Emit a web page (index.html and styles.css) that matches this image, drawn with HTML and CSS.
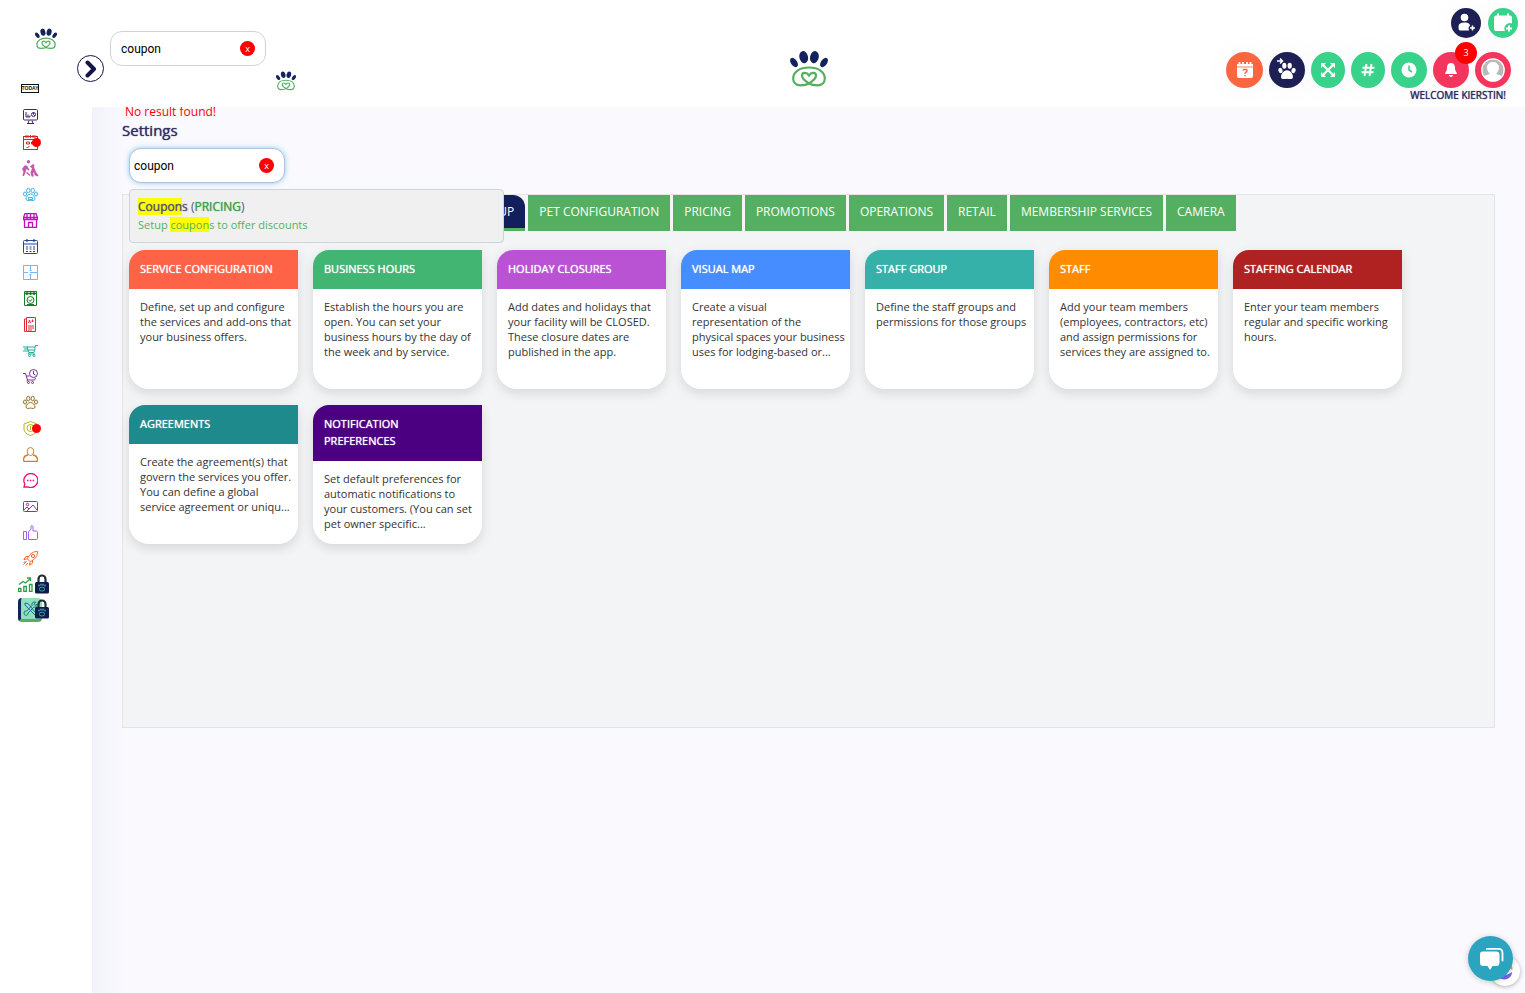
FILE: index.html
```html
<!DOCTYPE html>
<html lang="en">
  <head>
    <meta charset="UTF-8" />
    <meta name="viewport" content="width=device-width, initial-scale=1.0" />
    <title>Settings</title>
    <link rel="stylesheet" href="styles.css">
  </head>
  <body>
    <svg class="sprite" aria-hidden="true">
      <symbol id="logo" viewBox="0 0 38 36">
        <g fill="#14225f">
          <ellipse cx="4" cy="11.5" rx="3.1" ry="5.200" transform="rotate(-35 4 11.5)" />
          <ellipse cx="13.7" cy="6.2" rx="4.300" ry="6.200" transform="rotate(-12 13.7 6.2)" />
          <ellipse cx="24.4" cy="6.2" rx="4.300" ry="6.200" transform="rotate(12 24.4 6.2)" />
          <ellipse cx="34" cy="11.5" rx="3.1" ry="5.200" transform="rotate(35 34 11.5)" />
        </g>
        <path d="M19 32.5 C15 30 12 27.500 12 24.500 C12 21.500 16.500 20.500 19 24.500 C21.500 20.500 26 21.500 26 24.500 C26 27.500 23 30 19 32.500 C16 34.300 13 34.300 10.500 34.300 C6 34.300 3.200 31.500 3.200 27.500 C3.200 21 9.500 16.500 19 16.500 C28.500 16.500 34.800 21 34.800 27.500 C34.800 31.500 32 34.300 27.500 34.300 C25 34.300 22 34.300 19 32.500" fill="none" stroke="#54b060" stroke-width="2.200" />
      </symbol>
      <symbol id="paw" viewBox="0 0 16 16">
        <ellipse cx="2.200" cy="7.600" rx="1.800" ry="2.400" transform="rotate(-20 2.200 7.600)" />
        <ellipse cx="5.600" cy="3.400" rx="1.900" ry="2.700" />
        <ellipse cx="10.400" cy="3.400" rx="1.900" ry="2.700" />
        <ellipse cx="13.800" cy="7.600" rx="1.800" ry="2.400" transform="rotate(20 13.800 7.600)" />
        <path d="M8 7.300c-2.500 0-5.300 3-5.300 5.700 0 2.900 3.300 2.300 5.300 1.800 2 .5 5.300 1.100 5.300-1.800 0-2.700-2.800-5.700-5.300-5.700z" />
      </symbol>
      <symbol id="lock" viewBox="0 0 14 20">
        <path d="M3.500 10V5a3.500 3.500 0 0 1 7 0v5" fill="none" stroke="#222b38" stroke-width="2.200" />
        <rect x="0" y="8" width="14" height="11.500" rx="1.500" fill="#101c4c" />
        <g fill="#4a9fb0">
          <ellipse cx="4" cy="11.500" rx=".8" ry="1.100" />
          <ellipse cx="6" cy="10.700" rx=".8" ry="1.100" />
          <ellipse cx="8" cy="10.700" rx=".8" ry="1.100" />
          <ellipse cx="10" cy="11.500" rx=".8" ry="1.100" />
        </g>
        <rect x="4.500" y="13.300" width="5" height="3.600" rx="1.600" fill="none" stroke="#4a9fb0" />
      </symbol>
    </svg>

    <aside class="sidebar">
      <a class="brand" href="#" aria-label="Home"><svg width="22" height="22"><use href="#logo" /></svg></a>
      <nav class="menu">
        <a href="#" class="today">TODAY</a>
        <a href="#" class="c-navy" aria-label="Dashboard"><svg viewBox="0 0 15 15"><rect x=".5" y=".5" width="14" height="10.500" rx="1" /><path d="M3 3v5h4M5 5.500V8M7 6.500V8M5 14.500l1-3M10 14.500l-1-3M4 14.500h7" /><circle cx="10.500" cy="5.500" r="2" /><path d="M10.500 3.500v2l1.500 1.400" /></svg></a>
        <a href="#" class="c-red" aria-label="Requests"><svg viewBox="0 0 15 15"><rect x=".5" y="1.500" width="14" height="13" /><path d="M.5 4.500h14M3 0v3M5 0v3M7.500 0v3M10 0v3M12 0v3M3.500 7h3v2h-3zM8.500 7h3v2h-3zM3.500 12l1 1 2-2" /></svg><i class="dot"></i></a>
        <a href="#" class="c-plum" aria-label="Training"><svg class="wide" viewBox="0 0 17 17"><g fill="currentColor" stroke="none"><circle cx="6.500" cy="1.800" r="1.700" /><path d="M0 9l2.500-3.500h2.500l2.500 4.500-1 .8-2-2L4 11l-2 5H.5l1-4.500zM5 12l3.500 3-.8 1L4 13zM8 6.500l3-2.500 1.500 1-.5 2 2 5 2.500 3.500-1 1-3-1.500-.5-3-1 1.500 1 3H9.500l-1-4 1.500-4z" /></g></svg></a>
        <a href="#" class="c-sky" aria-label="Pets"><svg viewBox="0 0 15 15"><ellipse cx="2" cy="7" rx="1.500" ry="2" /><ellipse cx="5.300" cy="3.500" rx="1.700" ry="2.300" /><ellipse cx="9.700" cy="3.500" rx="1.700" ry="2.300" /><ellipse cx="13" cy="7" rx="1.500" ry="2" /><path d="M7.500 7C5 7 3 10 3 12s3 1.500 4.500 1.500S12 14 12 12 10 7 7.500 7zM5.500 10.500h4v2h-4z" /></svg></a>
        <a href="#" class="c-magenta" aria-label="Store"><svg viewBox="0 0 15 15"><path d="M1.500 7v7.500h12V7M2 .5h11l1.500 4v2h-14v-2zM.5 4.500h14M4 1v5M7.500 1v5M11 1v5M5.500 14.500V9.500h4v5" stroke-width="1.300" /></svg></a>
        <a href="#" class="c-blue" aria-label="Calendar"><svg viewBox="0 0 15 15"><rect x=".5" y="1.500" width="14" height="13" rx="1" /><path d="M.5 5h14M4 0v3M11 0v3M3 8h2M6.500 8h2M10 8h2M3 10h2M6.500 10h2M10 10h2M3 12.500h2M6.500 12.500h2M10 12.500h2" stroke-width="1.200" /></svg></a>
        <a href="#" class="c-light" aria-label="Facility map"><svg viewBox="0 0 15 15"><path d="M.5.5h14v14H.500zM7.500.5v5M7.500 9.500v5M.5 7.500h4.500M7 7.500h7.500M6.500 5.500h2M6.500 9.500h2" /></svg></a>
        <a href="#" class="c-green" aria-label="Check in"><svg viewBox="0 0 15 15"><path d="M1.500.5h12v14h-12z" /><path d="M2 2.500h11M4 1v3M7.500 1v3M11 1v3" stroke-width="1.600" /><circle cx="7.500" cy="9" r="3.500" /><path d="M5.500 9l1.500 1.300L9.500 8M4 13.500h7" /></svg></a>
        <a href="#" class="c-crimson" aria-label="Report cards"><svg viewBox="0 0 15 15"><path d="M3.500.5h9v14h-9zM3.500 2h-2v12.500h2M5 9h6M5 11h6M5 13h4" /><path d="M5.500 6l1-3 1 3M9.500 2.500v2.500M8.500 4h2" /></svg></a>
        <a href="#" class="c-teal" aria-label="Orders"><svg viewBox="0 0 15 15"><path d="M15 2.500h-2.500l-1.500 7H6L4 4h8M0 4h5M1 6h4M0 8h5M5 7h6M6 9.500L5 11h7" /><circle cx="6.500" cy="12.500" r="1" /><circle cx="11" cy="12.500" r="1" /></svg></a>
        <a href="#" class="c-purple" aria-label="Abandoned carts"><svg viewBox="0 0 15 15"><circle cx="10.500" cy="4.500" r="4" /><path d="M10.500 2v3l2 1M0 4.500h2.500L4.500 11h7l1-2M3.500 7h3M4.500 11L4 12.500" /><circle cx="5.500" cy="13.500" r="1" /><circle cx="9.500" cy="13.500" r="1" /></svg></a>
        <a href="#" class="c-brown" aria-label="Breeds"><svg viewBox="0 0 15 15"><ellipse cx="2" cy="7" rx="1.500" ry="2" /><ellipse cx="5.300" cy="3.500" rx="1.600" ry="2.300" /><ellipse cx="9.700" cy="3.500" rx="1.600" ry="2.300" /><ellipse cx="13" cy="7" rx="1.500" ry="2" /><path d="M7.500 7.500C5 7.500 3 10 3 12s3 1.500 4.500 1c1.500.5 4.500 1 4.500-1s-2-4.500-4.500-4.500z" /></svg></a>
        <a href="#" class="c-olive" aria-label="Vaccinations"><svg viewBox="0 0 15 15"><path d="M7.500.5L1 3v5c0 3 3 5.500 6.500 6.500C11 13.500 14 11 14 8V3z" /><circle cx="7.500" cy="7" r="3.500" /><path d="M7.500 5v4" /></svg><i class="dot"></i></a>
        <a href="#" class="c-amber" aria-label="Customers"><svg viewBox="0 0 15 15"><ellipse cx="7.500" cy="4.500" rx="3.300" ry="4" /><path d="M5 8c-3 .5-4.500 2-4.500 5 0 1 .5 1.500 1.500 1.500h11c1 0 1.500-.5 1.500-1.500 0-3-1.500-4.500-4.500-5" stroke-width="1.300" /></svg></a>
        <a href="#" class="c-pink" aria-label="Messages"><svg viewBox="0 0 15 15"><path d="M1 14l.8-3a7 7 0 1 1 3 2.800z" stroke-width="1.300" /><path d="M4 7.500h1.500M6.800 7.500h1.500M9.600 7.500h1.500" stroke-width="1.400" /></svg></a>
        <a href="#" class="c-magenta" aria-label="Gallery"><svg viewBox="0 0 15 15"><rect x=".5" y="2.500" width="14" height="10" rx="1" /><circle cx="4.500" cy="5.500" r="1.200" /><path d="M1 11l3-3 2 2 4-4 4 5M6 10l-2 2" /></svg></a>
        <a href="#" class="c-violet" aria-label="Reviews"><svg viewBox="0 0 15 15"><path d="M.5 6.500h3v8h-3zM5.500 7l2.500-3V1.500C8 .2 10 .2 10 2v4h3.500c1 0 1 1 1 1.500v6c0 .7-.5 1-1 1h-8z" /></svg></a>
        <a href="#" class="c-orange" aria-label="Marketing"><svg viewBox="0 0 15 15"><path d="M14.500.5c-4 0-7 1.500-9.500 6L4.500 8l2.500 2.500L8.500 10C13 7.500 14.500 4.500 14.500.5zM5.500 5.500H3L.8 8.500l3-.5M9.500 9.500V12l-3 2.200.5-3M3.500 10.500l-3 3M5 12l-2.500 2.500M2.500 10l-2 2" /><circle cx="10" cy="5" r="1.600" /></svg></a>
        <a href="#" class="c-growth locked" aria-label="Reports"><svg viewBox="0 0 15 15"><path d="M.5 11.500h2.500v3H.500zM5.800 9.500h2.500v5H5.800zM11.500 7.500H14v7h-2.500zM1 7.500l4-3 2.500 1.500L12 2M9 1h3.500v3" stroke-width="1.300" /></svg><svg class="lock"><use href="#lock" /></svg></a>
        <a href="#" class="locked active" aria-label="Settings"><svg viewBox="0 0 15 15"><path d="M2 2l3 .5L12 11l1.500 2-1.500 1-2-2L2 4zM14 3l-2 1.500-1-1L12.500 1C10 .5 8.500 2 9 4.500L3.500 10C1 9.500.5 12 1.500 13.500S5 14.500 5 12l6-6c2 .5 3.500-1 3-3z" /></svg><svg class="lock"><use href="#lock" /></svg></a>
      </nav>
      <button class="toggle" aria-label="Expand menu"><svg width="12" height="18" viewBox="0 0 12 18"><path d="M2.500 2.500L9 9l-6.500 6.500" fill="none" stroke="#14144b" stroke-width="4" stroke-linecap="round" stroke-linejoin="round" /></svg></button>
    </aside>

    <header class="header">
      <div class="header-left">
        <div class="search">
          <input type="text" value="coupon" aria-label="Search">
          <button class="clear" aria-label="Clear search">x</button>
        </div>
        <svg class="mini-logo" width="20" height="20"><use href="#logo" /></svg>
      </div>
      <svg class="main-logo" width="38" height="36"><use href="#logo" /></svg>
      <div class="header-right">
        <div class="quick">
          <button class="round small navy" aria-label="Add customer"><svg width="20" height="20" viewBox="0 0 20 20" fill="#fff"><circle cx="8.500" cy="4.500" r="3.800" /><path d="M2.500 13.500C2.500 11 4.500 9.500 8.500 9.500s5.500 1.500 5.500 3l-1.500 2 .5 3H4c-1 0-1.500-1-1.500-4z" /><path d="M16.500 12.500v5M14 15h5" stroke="#fff" stroke-width="1.600" /></svg></button>
          <button class="round small green" aria-label="Add booking"><svg width="20" height="20" viewBox="0 0 20 20" fill="#fff"><path d="M1 4.500C1 3.500 2 2.500 3 2.500h1V.5h2v2h8v-2h2v2h1c1 0 2 1 2 2v6a5.500 5.500 0 0 0-7 7.500H3c-1 0-2-1-2-2z" /><path d="M16 12.500v6M13 15.500h6" stroke="#fff" stroke-width="2" /></svg></button>
        </div>
        <div class="actions">
          <button class="round big orange" aria-label="Requests"><svg width="18" height="18" viewBox="0 0 18 18"><path d="M1 3h16v5H1zM1 8h16v7a2 2 0 0 1-2 2H3a2 2 0 0 1-2-2z" fill="#fff" /><path d="M3.500 1v4M7 1v4M11 1v4M14.500 1v4" stroke="#fff" stroke-width="1.800" /><path d="M1 6h16" stroke="#fb6640" stroke-width=".8" /><path d="M7 9.700c.3-2 4-2 4 0 0 1.500-2 1.500-2 3M9 14v1.300" stroke="#fb6640" stroke-width="1.500" fill="none" /></svg></button>
          <button class="round navy" aria-label="Check in pets"><svg width="30" height="28" viewBox="0 0 30 28"><path d="M5 5h5M8 2.500L10.500 5 8 7.500" fill="none" stroke="#fff" stroke-width="1.500" /><use href="#paw" x="6" y="6" width="18" height="18" fill="#fff" /></svg></button>
          <button class="round mid green" aria-label="Full screen"><svg width="14" height="14" viewBox="0 0 14 14"><path d="M2 2l10 10M12 2L2 12" stroke="#fff" stroke-width="2.200" /><path d="M0 0h5L0 5zM14 0v5L9 0zM0 14V9l5 5zM14 14H9l5-5z" fill="#fff" /></svg></button>
          <button class="round mid green" aria-label="Numbers"><svg width="14" height="14" viewBox="0 0 14 14"><path d="M5.500 1l-2 12M10.500 1l-2 12M1.500 4.700h12M.5 9.300h12" stroke="#fff" stroke-width="1.900" /></svg></button>
          <button class="round green" aria-label="Clock"><svg width="16" height="16" viewBox="0 0 16 16"><circle cx="8" cy="8" r="7.500" fill="#fff" /><path d="M8 3.500V8l3 2" fill="none" stroke="#39d28b" stroke-width="1.600" /></svg></button>
          <button class="round rose" aria-label="Notifications, 3 new"><svg width="14" height="16" viewBox="0 0 14 16" fill="#fff"><path d="M7 1c-3.500 0-4 3-4 5.500C3 9 1 10 1 12h12c0-2-2-3-2-5.500C11 4 10.500 1 7 1zM5 13h4c0 2.500-4 2.500-4 0z" /></svg><span class="count">3</span></button>
          <button class="round rose" aria-label="Account"><svg width="24" height="24" viewBox="0 0 24 24"><circle cx="12" cy="12" r="11.200" fill="#b9b9b9" stroke="#fff" stroke-width="1.300" /><path d="M3 19c1-2 4-2.500 6-3-1.500-1.500-3-3.500-3-6.500C6 2 18 2 18 9.500c0 3-1.500 5-3 6.500 2 .5 5 1 6 3-4 5.500-14 5.500-18 0z" fill="#fff" /></svg></button>
        </div>
        <div class="welcome">WELCOME KIERSTIN!</div>
      </div>
    </header>

    <main class="content">
      <p class="no-result">No result found!</p>
      <h1 class="title">Settings</h1>
      <div class="search focused">
        <input type="text" value="coupon" aria-label="Search settings">
        <button class="clear" aria-label="Clear settings search">x</button>
        <a class="suggestion" href="#">
          <span class="suggestion-name"><b><mark>Coupon</mark>s</b> (<b class="group">PRICING</b>)</span>
          <span class="suggestion-text">Setup <mark>coupon</mark>s to offer discounts</span>
        </a>
      </div>

      <section class="panel">
        <nav class="tabs">
          <a href="#" class="tab current">SETUP</a>
          <a href="#" class="tab">PET CONFIGURATION</a>
          <a href="#" class="tab">PRICING</a>
          <a href="#" class="tab">PROMOTIONS</a>
          <a href="#" class="tab">OPERATIONS</a>
          <a href="#" class="tab">RETAIL</a>
          <a href="#" class="tab">MEMBERSHIP SERVICES</a>
          <a href="#" class="tab">CAMERA</a>
        </nav>
        <div class="cards">
          <a href="#" class="card"><h2 class="tomato">SERVICE CONFIGURATION</h2><p>Define, set up and configure the services and add-ons that your business offers.</p></a>
          <a href="#" class="card"><h2 class="sea">BUSINESS HOURS</h2><p>Establish the hours you are open. You can set your business hours by the day of the week and by service.</p></a>
          <a href="#" class="card"><h2 class="orchid">HOLIDAY CLOSURES</h2><p>Add dates and holidays that your facility will be CLOSED. These closure dates are published in the app.</p></a>
          <a href="#" class="card"><h2 class="azure">VISUAL MAP</h2><p>Create a visual<br>representation of the<br>physical spaces your business uses for lodging-based or...</p></a>
          <a href="#" class="card"><h2 class="aqua">STAFF GROUP</h2><p>Define the staff groups and permissions for those groups</p></a>
          <a href="#" class="card"><h2 class="dark-orange">STAFF</h2><p>Add your team members (employees, contractors, etc) and assign permissions for services they are assigned to.</p></a>
          <a href="#" class="card"><h2 class="brick">STAFFING CALENDAR</h2><p>Enter your team members regular and specific working hours.</p></a>
          <a href="#" class="card"><h2 class="deep-teal">AGREEMENTS</h2><p>Create the agreement(s) that govern the services you offer. You can define a global service agreement or uniqu...</p></a>
          <a href="#" class="card"><h2 class="indigo">NOTIFICATION PREFERENCES</h2><p>Set default preferences for automatic notifications to your customers. (You can set pet owner specific...</p></a>
        </div>
      </section>
    </main>

    <div class="helper"><svg width="20" height="20" viewBox="0 0 20 20"><path d="M2 13c2 8 15 7 15-2-4 3-10 5-15 2z" fill="#7a63f0" /><path d="M13 2c4 1 5 5 4 7l-4-3z" fill="#f8a13c" /></svg></div>
    <button class="chat" aria-label="Open chat"><svg width="26" height="26" viewBox="0 0 26 26"><path d="M8 2.800h12.500c2.500 0 4 1 4 4v8.500" fill="none" stroke="#fff" stroke-width="1.800" /><path d="M5 5.500h13c2.500 0 3.500 1 3.500 3.500v7.500c0 2.500-1 3.500-3.500 3.500h-3.500L12 24l-2.500-4H5.500C3 20 2 19 2 16.500V9c0-2.500.5-3.500 3-3.500z" fill="#fff" /></svg></button>
  </body>
</html>
```

FILE: styles.css
```css
* {
  box-sizing: border-box;
}
body {
  margin: 0;
  min-height: 100vh;
  display: grid;
  grid-template-columns: 92px 1fr;
  grid-template-rows: 107px 1fr;
  background: #f9f9fe;
  font-family: "Open Sans", "Noto Sans", sans-serif;
  font-size: 12px;
}
a {
  color: inherit;
  text-decoration: none;
}
button {
  border: 0;
  padding: 0;
  cursor: pointer;
}
.sprite {
  position: absolute;
  width: 0;
  height: 0;
}

/* sidebar */
.sidebar {
  position: relative;
  grid-row: 1 / 3;
  background: #fff;
  z-index: 4;
}
.brand {
  display: flex;
  justify-content: center;
  height: 76px;
  padding-top: 28px;
}
.menu {
  display: flex;
  flex-direction: column;
  padding-left: 18px;
}
.menu a {
  display: flex;
  align-items: center;
  justify-content: center;
  position: relative;
  width: 24px;
  height: 26px;
}
.menu svg {
  width: 15px;
  height: 15px;
  fill: none;
  stroke: currentColor;
}
.menu svg.wide {
  width: 17px;
  height: 17px;
}
.menu .today {
  width: 18px;
  height: 9px;
  margin: 8px 3px 10px;
  border: 1px solid #111;
  color: #111;
  font: bold 5px/7px "Liberation Sans", sans-serif;
}
.dot {
  position: absolute;
  top: 9px;
  right: 1px;
  width: 9px;
  height: 9px;
  border-radius: 50%;
  background: #f00;
}
.menu .locked {
  justify-content: flex-start;
}
.menu svg.lock {
  position: absolute;
  left: 17px;
  top: 3px;
  width: 14px;
  height: 20px;
  stroke: none;
}
.menu .active {
  height: 24px;
  margin-top: 1px;
  padding-left: 2px;
  background: #8fe0bb;
  border-left: 3px solid #14225f;
  border-bottom: 3px solid #54b060;
  border-radius: 4px;
  color: #1f6f8b;
}
.menu .active svg.lock {
  left: 14px;
  top: 1px;
}
.c-navy { color: #3d2475; }
.c-red { color: #e01f1f; }
.c-plum { color: #c45aa8; }
.c-sky { color: #3fb4e8; }
.c-magenta { color: #bb14bb; }
.c-blue { color: #24479c; }
.c-light { color: #74b7f5; }
.c-green { color: #178024; }
.c-crimson { color: #e02a36; }
.c-teal { color: #25ae9a; }
.c-purple { color: #74308f; }
.c-brown { color: #91702a; }
.c-olive { color: #b4b41e; }
.c-amber { color: #d97b23; }
.c-pink { color: #f0127b; }
.c-violet { color: #9a62ef; }
.c-orange { color: #f2642b; }
.c-growth { color: #2ba048; }
.toggle {
  position: absolute;
  right: -12px;
  top: 55px;
  width: 27px;
  height: 27px;
  display: flex;
  align-items: center;
  justify-content: center;
  border: 1px solid #14144b;
  border-radius: 50%;
  background: #fff;
}

/* header */
.header {
  position: relative;
  z-index: 3;
  display: grid;
  grid-template-columns: 1fr auto 1fr;
  align-items: start;
  background: #fff;
}
.header-left {
  display: flex;
  align-items: flex-start;
  gap: 10px;
  padding: 31px 0 0 18px;
}
.mini-logo {
  margin-top: 40px;
}
.main-logo {
  margin-top: 51px;
}
.header-right {
  display: flex;
  flex-direction: column;
  align-items: flex-end;
  padding: 8px 14px 0 0;
}
.quick {
  display: flex;
  gap: 7px;
  margin-right: -7px;
}
.actions {
  display: flex;
  align-items: center;
  gap: 6px;
  margin-top: 14px;
}
.round {
  position: relative;
  display: flex;
  align-items: center;
  justify-content: center;
  width: 36px;
  height: 36px;
  border-radius: 50%;
  box-shadow: 0 0 30px rgba(60, 60, 140, 0.04);
}
.small {
  width: 30px;
  height: 30px;
}
.mid {
  width: 34px;
}
.big {
  width: 37px;
}
.navy { background: #1e1f55; }
.green { background: #39d28b; }
.orange { background: #fb6640; }
.rose { background: #f4365f; }
.count {
  position: absolute;
  top: -10px;
  right: -8px;
  width: 22px;
  height: 22px;
  border-radius: 50%;
  background: #f00;
  color: #fff;
  font: 9px/22px "Open Sans", sans-serif;
}
.welcome {
  margin-right: 5px;
  color: #2a2860;
  font-size: 10px;
  line-height: 14px;
  text-shadow: 0 0 1px #2a2860;
}

/* search box */
.search {
  position: relative;
  width: 156px;
}
.search input {
  display: block;
  width: 100%;
  height: 35px;
  padding: 0 40px 0 10px;
  border: 1px solid #ced4da;
  border-radius: 12px;
  background: #fff;
  color: #000;
  font: 12px Roboto, sans-serif;
  outline: 0;
}
.clear {
  position: absolute;
  top: 10px;
  right: 11px;
  width: 15px;
  height: 15px;
  border-radius: 50%;
  background: #f00;
  color: #fff;
  font: 9px/14px "Open Sans", sans-serif;
}

/* content */
.content {
  padding: 0 30px 30px;
  background: linear-gradient(90deg, #f2f2fa, #f9f9fe 32px);
}
.no-result {
  margin: -4px 0 0 3px;
  color: #f00;
  line-height: 17px;
}
.title {
  margin: 0 0 7px;
  color: #332f60;
  font-size: 15px;
  font-weight: normal;
  line-height: 21px;
  text-shadow: 0 0 1px #332f60;
}
.focused {
  margin-left: 7px;
}
.focused input {
  padding-left: 4px;
  border-color: #b9bde0;
  box-shadow: 0 0 5px rgba(81, 190, 235, 0.7);
}
.suggestion {
  position: absolute;
  z-index: 1;
  top: 41px;
  left: 0;
  width: 375px;
  height: 54px;
  padding: 8px;
  border: 1px solid #ced4da;
  border-radius: 4px;
  background: #f0f0f0;
}
.suggestion span {
  display: block;
}
.suggestion-name {
  color: #535370;
  line-height: 18px;
}
.suggestion-name b {
  font-weight: normal;
  text-shadow: 0 0 1px currentColor;
}
.suggestion-name .group {
  color: #43a047;
}
.suggestion-text {
  color: #54b060;
  font-size: 11px;
  line-height: 18px;
}
mark {
  background: #ff0;
  color: inherit;
}
.panel {
  min-height: 534px;
  margin-top: 11px;
  border: 1px solid #e3e4e8;
  background: #f2f4f6;
}
.tabs {
  display: flex;
  justify-content: center;
  gap: 3px;
}
.tab {
  height: 36px;
  padding: 0 11px;
  background: #54b060;
  color: #fff;
  line-height: 34px;
}
.current {
  width: 144px;
  text-align: right;
  background: #121f5c;
  border-bottom: 3px solid #54b060;
  border-radius: 12px 12px 0 0;
}
.cards {
  display: grid;
  grid-template-columns: repeat(auto-fill, 169px);
  gap: 16px 15px;
  padding: 19px 6px;
}
.card {
  min-height: 139px;
  overflow: hidden;
  border-radius: 16px 0 20px 20px;
  background: #fff;
  box-shadow: 0 4px 12px rgba(0, 0, 0, 0.12);
}
.card h2 {
  margin: 0;
  padding: 10px 11px 12px;
  color: #fff;
  font-size: 11px;
  font-weight: normal;
  line-height: 17px;
  text-shadow: 0 0 1px #fff;
}
.card p {
  margin: 0;
  padding: 10px 4px 0 11px;
  color: #333;
  font-size: 11px;
  line-height: 15px;
}
.tomato { background: #ff6347; }
.sea { background: #42b572; }
.orchid { background: #ba52d4; }
.azure { background: #468dff; }
.aqua { background: #35b1a9; }
.dark-orange { background: #ff8c00; }
.brick { background: #b02222; }
.deep-teal { background: #1e8a8b; }
.indigo { background: #4b0082; }

/* chat */
.chat {
  position: fixed;
  right: 12px;
  bottom: 12px;
  z-index: 5;
  display: flex;
  align-items: center;
  justify-content: center;
  width: 45px;
  height: 45px;
  border-radius: 50%;
  background: #2ba4bf;
  box-shadow: 0 1px 6px rgba(0, 0, 0, 0.2);
}
.helper {
  position: fixed;
  right: 5px;
  bottom: 7px;
  z-index: 4;
  display: flex;
  align-items: center;
  justify-content: center;
  width: 30px;
  height: 30px;
  border-radius: 50%;
  background: #fff;
  box-shadow: 0 1px 4px rgba(0, 0, 0, 0.3);
}
```
